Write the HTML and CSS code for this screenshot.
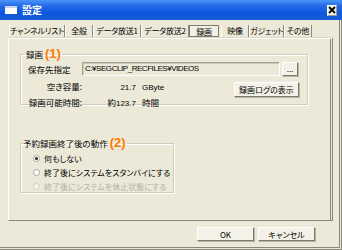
FILE: index.html
```html
<!DOCTYPE html>
<html lang="ja">
<head>
<meta charset="utf-8">
<link rel="stylesheet" href="styles.css">
</head>
<body>
<div class="window">
  <div class="titlebar">
    <span class="appicon"></span>
    <span class="title">設定</span>
    <span class="close"><svg width="8" height="8" viewBox="0 0 8 8"><path d="M1 1L7 7M7 1L1 7" stroke="#000" stroke-width="1.8"/></svg></span>
  </div>
  <div class="frame">
    <div class="tabs">
      <span class="tab t1">チャンネルリスト</span>
      <span class="tab t2">全般</span>
      <span class="tab t3">データ放送1</span>
      <span class="tab t3">データ放送2</span>
      <span class="tab active">録画</span>
      <span class="tab t2">映像</span>
      <span class="tab t4">ガジェット</span>
      <span class="tab t5">その他</span>
    </div>
    <div class="panel">
      <fieldset class="group g1">
        <legend>録画<b class="num">(1)</b></legend>
        <div class="pathrow">
          <span class="lbl">保存先指定</span>
          <span class="field">C:¥SEGCLIP_RECFILES¥VIDEOS</span>
          <span class="btn dots">...</span>
        </div>
        <div class="inforow">
          <div class="stats">
            <div class="srow"><span class="k">空き容量:</span><span class="v">21.7</span><span class="u">GByte</span></div>
            <div class="srow"><span class="k">録画可能時間:</span><span class="v"><span class="ja">約</span>123.7</span><span class="u ja">時間</span></div>
          </div>
          <span class="btn log">録画ログの表示</span>
        </div>
      </fieldset>
      <fieldset class="group g2">
        <legend>予約録画終了後の動作<b class="num">(2)</b></legend>
        <div class="radio"><span class="dot on"></span>何もしない</div>
        <div class="radio"><span class="dot"></span>終了後にシステムをスタンバイにする</div>
        <div class="radio disabled"><span class="dot"></span>終了後にシステムを休止状態にする</div>
      </fieldset>
    </div>
    <div class="footer">
      <span class="btn foot">OK</span>
      <span class="btn foot">キャンセル</span>
    </div>
  </div>
</div>
</body>
</html>
```
FILE: styles.css
```css
* { box-sizing: border-box; margin: 0; padding: 0; }
body {
  width: 342px; height: 250px; overflow: hidden;
  background: #ECE9D8;
  font-family: "Noto Sans CJK JP", "Noto Sans", sans-serif;
  font-size: 8px; color: #000; white-space: nowrap;
  font-feature-settings: "palt";
}
.window { width: 342px; height: 250px; display: flex; flex-direction: column; }
.titlebar {
  height: 20px; flex: none; display: flex; align-items: center;
  padding: 0 4px 0 5px;
  background: linear-gradient(#4a95f8 0%, #2468e6 30%, #0b56dc 70%, #1a5fd8 100%);
  color: #fff;
}
.appicon {
  width: 12px; height: 8px; margin-right: 5px;
  background: #fff; border-top: 2px solid #c7d6ef;
}
.title { flex: 1; font-weight: bold; font-size: 10px; line-height: 12px; }
.close {
  width: 10px; height: 11px; display: flex; align-items: center; justify-content: center;
  background: #f1f0ea; border: 1px solid #fff; border-right-color: #9a9a90; border-bottom-color: #9a9a90;
  margin-right: 1px;
}
.frame {
  flex: 1; display: flex; flex-direction: column;
  border-right: 3px double #8a8779; border-bottom: 3px double #8a8779;
}
.tabs { display: flex; height: 13px; margin: 5px 0 0 9px; align-items: stretch; }
.tab {
  line-height: 11px; height: 12px; text-align: center;
  border-right: 1px solid #8d8a7c; border-left: 1px solid #fff;
  letter-spacing: -0.2px;
}
.t1 { width: 56px; }
.t2 { width: 28px; }
.t3 { width: 48px; }
.t4 { width: 35px; }
.t5 { width: 28px; }
.tab.active {
  width: 30px;
  border: 1px solid #807d70; background: #f2f0e6; margin-right: 2px;
}
.panel {
  height: 183px; margin: 0 6px 0 8px;
  border: 1px solid #fff; border-right: 3px double #8a8779; border-bottom: 1px solid #8a8779;
  box-shadow: 0 -1px 0 #dcd8c6;
  padding: 8px 22px 0 11px;
  display: flex; flex-direction: column; align-items: flex-start;
}
.group {
  border: 1px solid #d0ccb8; box-shadow: 1px 1px 0 #fff, inset 1px 1px 0 #fff;
  min-width: 0;
}
.group legend { padding: 0 1px; line-height: 12px; height: 14px; display: flex; align-items: center; font-size: 8.5px; }
.num { color: #ff7a00; font-family: "Liberation Sans", Arial, sans-serif; font-size: 13px; line-height: 12px; font-weight: bold; margin-left: 2px; }
.g1 { width: 288px; height: 58px; padding: 0 8px 0 7px; }
.g1 legend { margin-left: -3px; }
.pathrow { display: flex; align-items: center; height: 15px; }
.lbl { width: 54px; font-size: 8.5px; }
.field {
  width: 198px; height: 14px; line-height: 12px; padding-left: 2px;
  font-family: "Liberation Sans", Arial, sans-serif; font-size: 8px; letter-spacing: -0.45px;
  background: #ECE9D8; border: 1px solid #a5a294; border-right-color: #fff; border-bottom-color: #fff;
  box-shadow: inset 1px 1px 0 #ccc9b8;
}
.btn {
  display: flex; align-items: center; justify-content: center;
  background: #f3f1e8; border: 1px solid #fff; border-right-color: #7d7b6e; border-bottom-color: #7d7b6e;
  box-shadow: 1px 1px 0 #b7b4a6;
}
.dots { width: 16px; height: 14px; margin-left: 2px; font-size: 8px; line-height: 8px; }
.inforow { display: flex; align-items: flex-start; justify-content: space-between; margin-top: 5px; }
.stats { display: flex; flex-direction: column; gap: 4px; flex: none; }
.srow { display: flex; align-items: baseline; line-height: 11px; font-size: 8.5px; }
.k { width: 54px; text-align: right; flex: none; }
.v { width: 54px; text-align: right; flex: none; font-family: "Liberation Sans", Arial, sans-serif; font-size: 8px; }
.u { margin-left: 6px; font-family: "Liberation Sans", sans-serif; font-size: 8px; }
.ja { font-family: "Noto Sans CJK JP", sans-serif; font-size: 8.5px; }
.log { width: 65px; height: 15px; margin-top: 1px; flex: none; }
.g2 { width: 154px; height: 57px; margin-top: 31px; padding: 1px 0 0 12px; }
.g2 legend { margin-left: -11px; }
.radio { display: flex; align-items: center; height: 14px; }
.radio.disabled { color: #b5b2a5; }
.dot {
  width: 7px; height: 7px; border-radius: 50%; margin-right: 4px;
  background: #fff; border: 1px solid #a9a69a; display: flex; align-items: center; justify-content: center;
}
.disabled .dot { border-color: #d2cfc2; background: #f5f4ee; }
.dot.on::after { content: ""; width: 3px; height: 3px; border-radius: 50%; background: #222; }
.footer { display: flex; justify-content: flex-end; gap: 4px; padding: 6px 24px 0 0; }
.foot { width: 57px; height: 14px; }
```
